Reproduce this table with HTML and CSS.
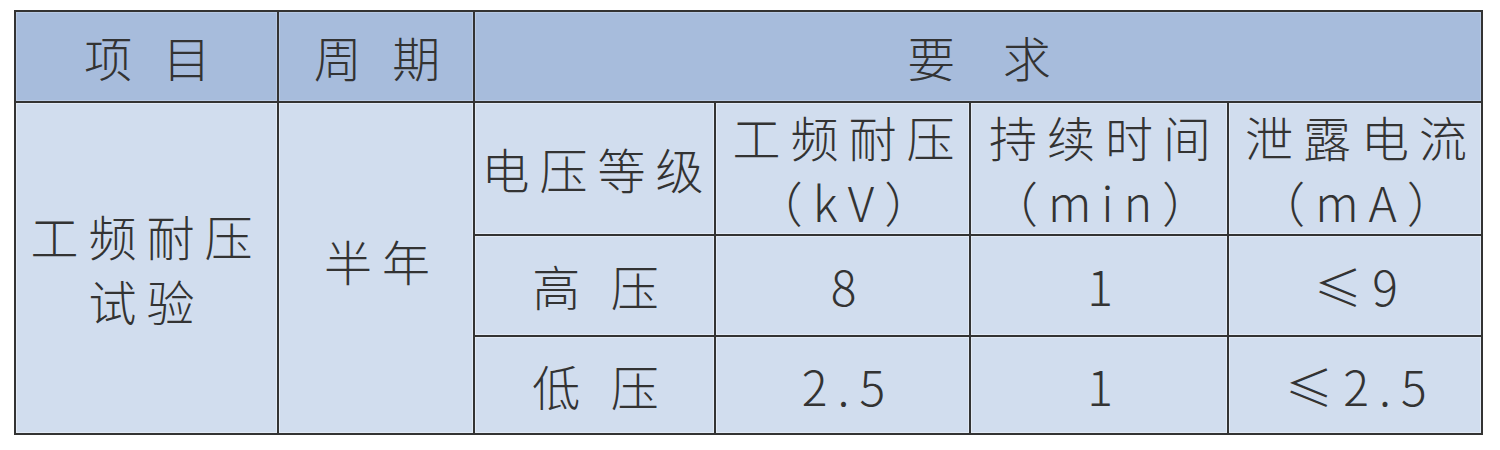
FILE: index.html
```html
<!DOCTYPE html>
<html lang="zh-CN">
<head>
<meta charset="utf-8">
<title>工频耐压试验</title>
<link rel="stylesheet" href="styles.css">
</head>
<body>
<div class="table">
  <div class="cell head c1">项 目</div>
  <div class="cell head c2">周 期</div>
  <div class="cell head req wide">要 求</div>

  <div class="cell item">工频耐压<br>试验</div>
  <div class="cell period">半年</div>
  <div class="cell level">电压等级</div>
  <div class="cell two">工频耐压<br>（kV）</div>
  <div class="cell two">持续时间<br>（min）</div>
  <div class="cell two">泄露电流<br>（mA）</div>

  <div class="cell">高 压</div>
  <div class="cell">8</div>
  <div class="cell">1</div>
  <div class="cell">≤9</div>

  <div class="cell">低 压</div>
  <div class="cell">2.5</div>
  <div class="cell">1</div>
  <div class="cell">≤2.5</div>
</div>
</body>
</html>
```

FILE: styles.css
```css
html, body {
  margin: 0;
  padding: 0;
  background: #ffffff;
}

.table {
  display: grid;
  grid-template-columns: 261px 194px 239px 253px 256px 252px;
  grid-template-rows: 89px 131px 99px 96px;
  gap: 2px;
  padding: 2px;
  width: fit-content;
  margin: 10px 0 0 14px;
  background: #333333;
  font-family: "Noto Sans CJK SC", "Noto Sans", sans-serif;
  font-size: 48px;
  font-weight: 300;
  letter-spacing: 10px;
  color: #333333;
}

.cell {
  display: flex;
  align-items: center;
  justify-content: center;
  text-align: center;
  white-space: nowrap;
  padding-left: 12px;
  background: #d1ddee;
  line-height: 65px;
  box-shadow: inset 0 0 0 1px #e2eaf5;
}

.head {
  background: #a7bcdc;
  box-shadow: inset 0 0 0 1px #b8c9e3;
}

.wide {
  grid-column: 3 / 7;
}

.req {
  word-spacing: 17px;
}

.level {
  padding-left: 6px;
}

.item {
  grid-row: 2 / 5;
  padding-left: 0;
}

.period {
  grid-row: 2 / 5;
  padding-bottom: 16px;
}
```
